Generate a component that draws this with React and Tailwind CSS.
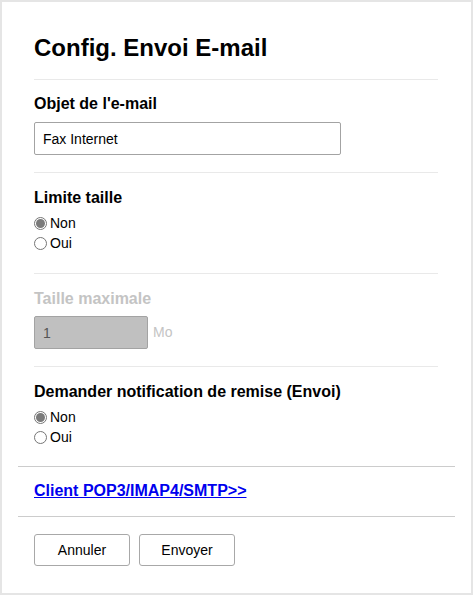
import React from 'react';

const Radio = ({ checked, label }) => (
  <label className="flex items-center h-[20.5px] text-[14px] text-black">
    <span className="w-[13px] h-[13px] rounded-full border border-[#767676] bg-white flex items-center justify-center">
      {checked && <span className="w-[9px] h-[9px] rounded-full bg-[#7a7a7a]" />}
    </span>
    <span className="ml-[3px]">{label}</span>
  </label>
);

const Divider = () => <div className="h-px bg-[#e9e9e9]" />;

const App = () => {
  return (
    <div
      className="w-[473px] h-[595px] border-2 border-[#e5e5e5] bg-white text-black"
      style={{ fontFamily: '"Liberation Sans", Arial, sans-serif' }}
    >
      {/* Main form */}
      <div className="px-[32px] pr-[33px]">
        <h1 className="text-[24px] font-bold leading-[28px] mt-[32px] mb-[17px]">Config. Envoi E-mail</h1>
        <Divider />

        <div className="pt-[15px] pb-[17px]">
          <h3 className="text-[16px] font-bold leading-[18px]">Objet de l'e-mail</h3>
          <input
            type="text"
            defaultValue="Fax Internet"
            className="mt-[9px] w-[307px] h-[33px] border border-[#a3a3a3] rounded-[2px] px-[8px] text-[14px] text-black outline-none"
          />
        </div>
        <Divider />

        <div className="pt-[16px] pb-[19px]">
          <h3 className="text-[16px] font-bold leading-[18px]">Limite taille</h3>
          <div className="mt-[6px]">
            <Radio checked label="Non" />
            <Radio label="Oui" />
          </div>
        </div>
        <Divider />

        <div className="pt-[16px] pb-[17px]">
          <h3 className="text-[16px] font-bold leading-[18px] text-[#c4c4c4]">Taille maximale</h3>
          <div className="mt-[8px] flex items-center">
            <input
              type="text"
              disabled
              defaultValue="1"
              className="w-[114px] h-[33px] border border-[#a3a3a3] rounded-[2px] bg-[#c0c0c0] px-[8px] text-[14px] text-[#555]"
            />
            <span className="ml-[5px] text-[14px] text-[#c4c4c4]">Mo</span>
          </div>
        </div>
        <Divider />

        <div className="pt-[16px] pb-[18px]">
          <h3 className="text-[16px] font-bold leading-[18px]">Demander notification de remise (Envoi)</h3>
          <div className="mt-[6px]">
            <Radio checked label="Non" />
            <Radio label="Oui" />
          </div>
        </div>
      </div>

      {/* Link section */}
      <div className="mx-[16px] border-t border-[#cccccc]">
        <div className="px-[16px] pt-[15px] pb-[16px] leading-[18px]">
          <a href="#" className="text-[16px] font-bold leading-[18px] text-[#0000ee] underline">
            Client POP3/IMAP4/SMTP&gt;&gt;
          </a>
        </div>
      </div>
      <div className="mx-[16px] border-t border-[#cccccc]">
        <div className="px-[16px] pt-[17px] flex gap-[9px]">
          <button className="w-[96px] h-[32px] border border-[#a8a8a8] rounded-[3px] bg-white text-[14px] text-black">
            Annuler
          </button>
          <button className="w-[96px] h-[32px] border border-[#a8a8a8] rounded-[3px] bg-white text-[14px] text-black">
            Envoyer
          </button>
        </div>
      </div>
    </div>
  );
};

export default App;
